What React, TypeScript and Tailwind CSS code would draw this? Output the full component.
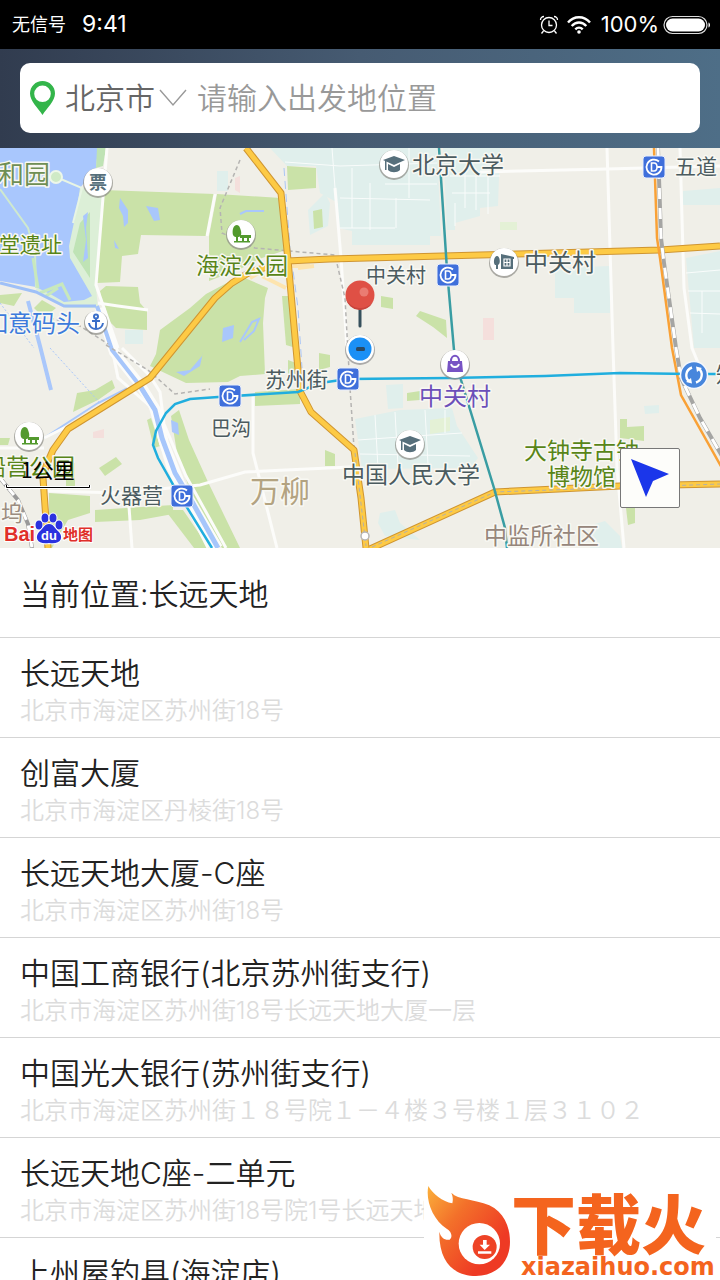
import React, { useState } from 'react';

interface Place {
  name: string;
  address?: string;
}

interface MapLabel {
  text: string;
  x: number;
  y: number;
  size: number;
  color: string;
}

const places: Place[] = [
  { name: '长远天地', address: '北京市海淀区苏州街18号' },
  { name: '创富大厦', address: '北京市海淀区丹棱街18号' },
  { name: '长远天地大厦-C座', address: '北京市海淀区苏州街18号' },
  { name: '中国工商银行(北京苏州街支行)', address: '北京市海淀区苏州街18号长远天地大厦一层' },
  { name: '中国光大银行(苏州街支行)', address: '北京市海淀区苏州街１８号院１－４楼３号楼１层３１０２' },
  { name: '长远天地C座-二单元', address: '北京市海淀区苏州街18号院1号长远天地' },
  { name: '上州屋钓具(海淀店)' },
];

const SLATE = '#4b5b5f';
const PARK = '#588518';

const labels: MapLabel[] = [
  { text: '和园', x: -2, y: 36, size: 26, color: '#6f8f55' },
  { text: '堂遗址', x: -1, y: 104, size: 21, color: PARK },
  { text: '如意码头', x: -16, y: 184, size: 24, color: '#3d7bdc' },
  { text: '海淀公园', x: 196, y: 126, size: 23, color: PARK },
  { text: '北京大学', x: 412, y: 25, size: 23, color: SLATE },
  { text: '五道', x: 675, y: 26, size: 21, color: SLATE },
  { text: '中关村', x: 524, y: 123, size: 24, color: SLATE },
  { text: '中关村', x: 366, y: 135, size: 20, color: SLATE },
  { text: '中关村', x: 419, y: 257, size: 24, color: '#6c4fb9' },
  { text: '苏州街', x: 265, y: 239, size: 21, color: SLATE },
  { text: '巴沟', x: 211, y: 288, size: 20, color: SLATE },
  { text: '中国人民大学', x: 342, y: 335, size: 23, color: SLATE },
  { text: '大钟寺古钟', x: 524, y: 311, size: 23, color: PARK },
  { text: '博物馆', x: 547, y: 337, size: 23, color: PARK },
  { text: '中监所社区', x: 484, y: 396, size: 23, color: '#96867b' },
  { text: '万柳', x: 250, y: 354, size: 30, color: '#b3a381' },
  { text: '火器营', x: 100, y: 355, size: 21, color: SLATE },
  { text: '船营公园', x: -17, y: 327, size: 23, color: PARK },
  { text: '坞', x: 1, y: 373, size: 22, color: '#9b8c80' },
  { text: '知', x: 716, y: 234, size: 21, color: SLATE },
];

const metroStops = [
  [448, 127],
  [654, 19],
  [348, 231],
  [230, 248],
  [182, 348],
];

const greens = [
  'M103 42 215 46 206 88 141 87 138 106 122 108 120 134 97 135Z',
  'M217 46 281 50 286 102 262 110 240 121 209 133V88Z',
  'M100 143 106 138 138 139 140 155 147 163 147 182 116 180 104 168Z',
  'M156 206 160 182 190 160 206 146 240 128 268 140 265 150 263 175 265 226 240 228 228 234 186 235 150 218Z',
  'M0 147 22 145 14 158 0 155Z',
  'M34 160 42 152 56 160 44 170Z',
  'M73 264 77 245 95 242 112 232 115 240 98 252Z',
  'M99 320 116 309 122 316 105 328Z',
  'M0 290H10L8 297H0Z',
  'M66 315H75V338H66Z',
  'M49 345 90 348V365L68 372 62 382 52 400H49Z',
  'M95 362 173 357V366L140 372 95 374Z',
  'M171 268 179 262 189 292 208 334 240 400H222L192 348 177 305Z',
  'M165 362H183L209 400H194Z',
  'M147 272 151 270 160 298 154 300Z',
  'M255 244 300 241V256L255 258Z',
  'M282 148 290 148 296 200 286 197Z',
  'M319 205 330 207V219L319 222Z',
  'M288 212 296 215V230H288Z',
  'M325 302 335 306V318H325Z',
  'M407 245 420 243V252L407 253Z',
  'M620 271H627V279L644 278V293L620 290Z',
  'M626 360H635V375L628 377Z',
  'M287 18 316 20V40L288 42Z',
  'M313 63 322 61 323 79 314 81Z',
  'M381 148 393 150V161L381 159Z',
  'M416 168 420 163 446 172 447 190 433 179Z',
];

const campuses = [
  'M270 0H437L441 88 430 88V97H352V83L338 80V55L320 45 316 18 287 18Z',
  'M443 0H500L498 58 480 60V68L455 75V82H447Z',
  'M308 62 325 45 330 55 328 78 310 87Z',
  'M355 271 400 262 452 260 457 278 478 310 470 320 362 321Z',
  'M386 237 403 236V260L388 261Z',
  'M683 43 720 40V57H683Z',
  'M686 110 720 103V200H694Z',
  'M555 120 610 118V165H574V150H555Z',
  'M644 258 659 257V265L645 266Z',
  'M595 376 605 373 620 388 622 400H590Z',
  'M380 365 395 362 400 375 420 392 385 388 378 375Z',
  'M217 23H228V43H217Z',
  'M125 182H143V196H125Z',
];

const majorRoads = [
  'M246 0 281 45 288 112 296 200 300 243 311 264 354 302 361 350 366 400',
  'M48 400 43 330 46 318 53 302 68 281 150 230 215 150 232 135 250 124 287 113 330 111 480 107 660 102 720 98',
  'M370 401 495 344 620 338 720 336',
];

const minorRoads = [
  'M607 0 613 200 617 320 624 400',
  'M480 24 607 21 720 18',
  'M680 0 684 140 692 200 701 222',
  'M335 40 341 110 347 200',
  'M253 248 253 305 277 400',
  'M48 343 120 345 200 337 245 324 350 319',
  'M128 345 132 400',
  'M107 0 96 137 118 200',
  'M215 46 207 88',
  'M0 300H44M44 290 68 278',
  'M98 155 118 158 148 162',
  'M112 200 118 230 150 258 168 320 208 400',
  'M122 200 150 228 160 244 164 276 186 328 226 400',
];

const campusPaths = [
  'M332 0 335 40M285 14 340 18 437 15M340 50 430 52M352 20V80M370 35V82M396 50V80M409 0V50M340 80H395M385 36H437',
  'M450 28H500M452 45H490M455 55 455 78M465 20V60M476 28V62M488 26V66',
  'M375 267 378 320M395 264 398 318M425 262 428 316M358 292 400 289 462 285M360 306 470 308M445 262V285',
  'M686 125 720 122M688 143H720M690 165 720 166M702 143V185',
];

const RoundBadge: React.FC<{ x: number; y: number; r?: number; children?: React.ReactNode }> = ({
  x,
  y,
  r = 14,
  children,
}) => (
  <g transform={`translate(${x} ${y})`}>
    <circle cy="1" r={r + 1} fill="#8b8b86" opacity="0.7" />
    <circle r={r} fill="#fff" />
    {children}
  </g>
);

const TreeGlyph = () => (
  <g fill="#539a2e">
    <path d="M-4-9C-8-9-9-3-8 1-7 3-5 3-5 3V8H-3V3C-1 3 1 1 0-3-1-7-2-9-4-9Z" />
    <path d="M-1 1H10V4H8V8H6V4H3V8H1V4H-1ZM-7 7H9V8.500H-7Z" />
  </g>
);

const CapGlyph = () => (
  <g fill="#566f7b">
    <path d="M0-8 11-4 0 1-11-4Z" />
    <path d="M-6 0 0 3 6 0V6C3 9-3 9-6 6Z" />
    <path d="M-9-3H-7.500V6H-9Z" />
  </g>
);

const MetroStop: React.FC<{ x: number; y: number }> = ({ x, y }) => (
  <g transform={`translate(${x} ${y})`}>
    <rect x="-11" y="-11" width="22" height="22" rx="3" fill="#3f6fdb" stroke="#e8eefb" />
    <path d="M5-5.500A7.500 7.500 0 1 0 7.500 0H3" fill="none" stroke="#fff" strokeWidth="1.800" />
    <path d="M-2.500-4H0C4-4 4 4 0 4H-2.500Z" fill="none" stroke="#fff" strokeWidth="1.600" />
  </g>
);

const StatusBar = () => (
  <div className="flex h-[49px] shrink-0 items-center justify-between bg-black pr-2.5 pl-3 text-white">
    <div className="flex items-center gap-4">
      <span className="text-lg">无信号</span>
      <span className="text-[23px]">9:41</span>
    </div>
    <div className="flex items-center">
      <svg width="20" height="20" viewBox="0 0 20 20" fill="none" stroke="#fff" strokeWidth="1.300" className="mr-2">
        <circle cx="10" cy="10" r="7.500" />
        <path d="M10 5.500V10.500H13.500M1.500 5C1.500 3 3 1.500 5 1.500M18.500 5C18.500 3 17 1.500 15 1.500M4.500 16 2.500 18.500M15.500 16 17.500 18.500" />
      </svg>
      <svg width="24" height="18" viewBox="0 0 24 18" fill="none" stroke="#fff" strokeWidth="2.400" className="mr-2.5">
        <path d="M1 6.500C7-0.500 17-0.500 23 6.500M4.700 10C9 5.300 15 5.300 19.300 10M8.300 13.300C10.500 11 13.500 11 15.700 13.300" />
        <circle cx="12" cy="16" r="1.800" fill="#fff" stroke="none" />
      </svg>
      <span className="text-[22px]">100%</span>
      <svg width="47" height="20" viewBox="0 0 47 20" className="ml-1">
        <rect x="1" y="1.500" width="43" height="17" rx="8.500" fill="none" stroke="#ddd" strokeWidth="1.200" />
        <rect x="3" y="3.500" width="39" height="13" rx="6.500" fill="#fff" />
        <path d="M45.500 7.500C47.500 8 47.500 12 45.500 12.500Z" fill="#fff" />
      </svg>
    </div>
  </div>
);

const SearchHeader = () => {
  const [city, setCity] = useState('北京市');
  const [keyword, setKeyword] = useState('');

  return (
    <header className="shrink-0 bg-linear-to-r from-[#313c4f] via-[#465b72] to-[#4e6e87] px-5 pt-3.5 pb-[15px]">
      <form className="flex h-[70px] items-center rounded-[10px] bg-white pl-2.5">
        <svg width="25" height="34" viewBox="0 0 25 34" className="mr-2.5 shrink-0">
          <path
            d="M12.500 0C5.500 0 0 5.500 0 12.500 0 20 8 27 12.500 34 17 27 25 20 25 12.500 25 5.500 19.500 0 12.500 0ZM12.500 4.500A8.300 8.300 0 1 1 12.500 21.100 8.300 8.300 0 1 1 12.500 4.500Z"
            fill="#33b54a"
            fillRule="evenodd"
          />
        </svg>
        <label className="flex shrink-0 items-center gap-1">
          <select
            aria-label="城市"
            value={city}
            onChange={(e) => setCity(e.target.value)}
            className="h-12 appearance-none bg-transparent text-[30px] font-[350] text-[#666] outline-none"
          >
            <option>北京市</option>
          </select>
          <svg width="28" height="18" viewBox="0 0 28 18" fill="none" stroke="#999" strokeWidth="1.400">
            <path d="M1 1 14 16 27 1" />
          </svg>
        </label>
        <input
          aria-label="出发地位置"
          type="text"
          value={keyword}
          onChange={(e) => setKeyword(e.target.value)}
          placeholder="请输入出发地位置"
          className="ml-2.5 h-12 min-w-0 flex-1 bg-transparent text-[30px] font-[350] text-[#666] outline-none placeholder:text-[#999]"
        />
      </form>
    </header>
  );
};

const CityMap = () => (
  <section className="relative h-[400px] shrink-0 overflow-hidden bg-[#f0efe8]">
    <svg
      viewBox="0 0 720 400"
      preserveAspectRatio="xMidYMid slice"
      className="block h-full w-full font-['Noto_Sans_CJK_SC',sans-serif]"
    >
      <rect width="720" height="400" fill="#f0efe8" />

      {/* Land use */}
      {campuses.map((d) => (
        <path key={d} d={d} fill="#e0efec" />
      ))}
      {greens.map((d) => (
        <path key={d} d={d} fill="#cae2a8" />
      ))}
      <path d="M235 30 240 28V45L235 42ZM93 284 104 281V290H93Z" fill="#f4dfdc" />
      <path d="M430 272 450 269V283L430 286ZM500 74H517V82H500Z" fill="#e4f1d6" />
      <path d="M483 170H494V192H483Z" fill="#f5dfdc" />

      {/* Lake and canals */}
      <path d="M78 40 103 41 96 140 98 160 66 160 36 142Z" fill="#dcefd7" />
      <path d="M0 0H98L96 20 80 40 77 60 69 98 70 110 92 148 84 152 64 154 52 147 36 139 0 133Z" fill="#a9c7fd" />
      <path d="M97 0H106L103 18 96 20ZM80 75 90 64V130L73 104Z" fill="#bfe3b5" />
      <path d="M83 68 88 64 86 80 88 110 83 114 86 92Z" fill="#a9c7fd" />
      <path d="M73 75 82 40 56 29" fill="none" stroke="#e8f5e4" strokeWidth="2" />
      <circle cx="56" cy="29" r="6" fill="#cfeac6" stroke="#edf7e9" strokeWidth="2" />
      <path d="M0 41 28 80 35 105 36 140" fill="none" stroke="#cfe9cf" strokeWidth="2" />
      <path d="M33 110 38 140M40 145 62 136 70 152M46 148 58 140" fill="none" stroke="#c8e8bd" strokeWidth="3" />
      <path d="M0 135 36 144 64 158 96 158" fill="none" stroke="#9fc0f7" strokeWidth="3" />
      <path d="M28 153 40 198 51 242" fill="none" stroke="#a9c7fb" strokeWidth="4" />
      <path d="M44 290 98 255 128 240" fill="none" stroke="#a9c7fb" strokeWidth="2" />
      <path d="M50 200 100 255M0 155 34 200" fill="none" stroke="#a9c7fb" strokeDasharray="2 2" />
      <path d="M120 50 128 62 128 75 124 79 123 68 119 60ZM146 58 158 60 160 72 154 73ZM114 92 119 101 115 100Z" fill="#a9c7fb" />
      <path d="M223 180 234 177 233 190 222 194ZM176 224 190 222 202 208 203 204 200 218 184 228ZM171 272 178 275 179 287 172 284Z" fill="#a9c7fb" />
      <path d="M240 66 246 63H264M240 194 252 174 259 171 254 183 244 192" fill="none" stroke="#a9c7fb" strokeWidth="2" />

      {/* Streets */}
      {minorRoads.map((d) => (
        <path key={d} d={d} fill="none" stroke="#fcfcfa" strokeWidth="3" />
      ))}
      {campusPaths.map((d) => (
        <path key={d} d={d} fill="none" stroke="#f9fcfb" strokeWidth="1" />
      ))}
      <path d="M100 160 114 204 141 238 156 262 164 295 180 335 218 400" fill="none" stroke="#fcfcfa" strokeWidth="10" />
      <path d="M97 158 112 202 140 238 155 262" fill="none" stroke="#a6c6fb" strokeWidth="4" />
      <path d="M140 238 155 262 162 290 175 325 190 350 218 400" fill="none" stroke="#a6c6fb" strokeWidth="5" />
      <path d="M284 20 290 100 298 160 302 220" fill="none" stroke="#aac6f6" strokeDasharray="8 5" />
      <path
        d="M240 12 220 60 222 85 255 100 335 107 345 150 350 240 354 300M106 197 148 222 175 246 210 241M50 170 80 178 108 196"
        fill="none"
        stroke="#b5b4b2"
        strokeWidth="1.500"
        strokeDasharray="4 3"
      />
      <path d="M250 130 270 118 310 118M262 128 286 140M298 120 314 118" fill="none" stroke="#fde4ae" strokeWidth="4" />
      {majorRoads.map((d) => (
        <path key={d} d={d} fill="none" stroke="#cf9531" strokeWidth="7" strokeLinejoin="round" />
      ))}
      {majorRoads.map((d) => (
        <path key={d} d={d} fill="none" stroke="#fdca45" strokeWidth="5" strokeLinejoin="round" />
      ))}
      <path d="M355 305 366 398M372 399 495 344 720 336" fill="none" stroke="#b3b0aa" strokeDasharray="4 3" />

      {/* Railways and metro lines */}
      <path d="M658 0 661 90 664 115 676 200 681 230 700 270 722 308" fill="none" stroke="#a5a5a3" strokeWidth="4" />
      <path
        d="M658 0 661 90 664 115 676 200 681 230 700 270 722 308"
        fill="none"
        stroke="#fff"
        strokeWidth="3"
        strokeDasharray="11 9"
      />
      <path d="M0 330 18 352 28 376 32 400" fill="none" stroke="#999" strokeWidth="4" />
      <path d="M0 330 18 352 28 376 32 400" fill="none" stroke="#fff" strokeWidth="3" strokeDasharray="8 6" />
      <path d="M654 0 657 90 660 110 672 200 681 247 722 320" fill="none" stroke="#f9a136" strokeWidth="2.500" />
      <path d="M439 0 447 122 454 202 461 232 494 340 505 380 507 400" fill="none" stroke="#399da3" strokeWidth="2.500" />
      <path
        d="M212 400 175 340 158 310 153 297 156 283 166 265 175 256 190 251 218 249 298 244 320 235 348 231 450 230 545 228 620 225 690 226 720 226"
        fill="none"
        stroke="#20aede"
        strokeWidth="2.500"
      />
      <circle cx="365" cy="388" r="4" fill="#fff" stroke="#b5b5b5" strokeWidth="1.500" />

      {labels.map((label) => (
        <text
          key={`${label.text}${label.x}`}
          x={label.x}
          y={label.y}
          fontSize={label.size}
          fill={label.color}
          stroke="#f8f8f3"
          strokeWidth="3"
          strokeLinejoin="round"
          paintOrder="stroke"
        >
          {label.text}
        </text>
      ))}

      {/* Points of interest */}
      {metroStops.map(([x, y]) => (
        <MetroStop key={`${x}-${y}`} x={x} y={y} />
      ))}
      <RoundBadge x={98} y={34}>
        <text y="7" fontSize="18" fontWeight="700" textAnchor="middle" fill="#566f7b">
          票
        </text>
      </RoundBadge>
      <RoundBadge x={241} y={86}>
        <TreeGlyph />
      </RoundBadge>
      <RoundBadge x={29} y={288}>
        <TreeGlyph />
      </RoundBadge>
      <RoundBadge x={394} y={16}>
        <CapGlyph />
      </RoundBadge>
      <RoundBadge x={410} y={296}>
        <CapGlyph />
      </RoundBadge>
      <RoundBadge x={96} y={174} r={11}>
        <g fill="none" stroke="#3b6fc9" strokeWidth="2">
          <circle cy="-5.500" r="2" />
          <path d="M0-3V7M-4-1H4M-7 1C-6 9 6 9 7 1" />
        </g>
      </RoundBadge>
      <RoundBadge x={504} y={114}>
        <path d="M-7-6C-10-6-11 1-9 3H-8V7H-6V3C-3 2-4-6-7-6Z" fill="#566f7b" />
        <path d="M-3-8 10-5V-3H9V7H-3Z" fill="#566f7b" />
        <path d="M0-3H6V4H0ZM3-3V4M0 0.500H6" fill="none" stroke="#fff" strokeWidth="1.200" />
      </RoundBadge>
      <RoundBadge x={455} y={216}>
        <path d="M-7-3H7L8 8H-8Z" fill="#7753c4" />
        <path d="M-4-3C-4-10 4-10 4-3" fill="none" stroke="#7753c4" strokeWidth="2" />
        <path d="M-4 0C-3 4 3 4 4 0" fill="none" stroke="#fff" strokeWidth="1.800" />
      </RoundBadge>
      <g transform="translate(694 227)">
        <circle r="13.500" fill="#4886dc" stroke="#f4f7fd" strokeWidth="1.500" />
        <path d="M-2-7.500C-9-5-9 3-5 6M2 7.500C9 5 9-3 5-6" fill="none" stroke="#fff" strokeWidth="2.400" />
        <path d="M-8 7-3 3-2 8.500ZM8-7 3-3 2-8.500Z" fill="#fff" />
      </g>

      {/* Current position and pin */}
      <circle cx="360" cy="202" r="15" fill="#8f8f8f" opacity="0.7" />
      <circle cx="360" cy="201" r="14" fill="#fff" />
      <circle cx="360" cy="201" r="11.500" fill="#1b90f5" />
      <rect x="356" y="199" width="9" height="4" rx="1.500" fill="#2c4a63" />
      <path d="M360 160V178" stroke="#36505c" strokeWidth="3" strokeLinecap="round" />
      <circle cx="360" cy="147" r="14.500" fill="#df5045" />
      <path d="M346 151A14.500 14.500 0 0 0 373 154 16 16 0 0 1 346 151Z" fill="#c8443c" />
      <circle cx="364" cy="144" r="4.500" fill="#ea7c72" />

      {/* Scale */}
      <text x="21" y="330" fontSize="21" fill="#000">
        1公里
      </text>
      <path d="M6.500 337V339.500H89.500V337" fill="none" stroke="#fff" strokeWidth="3" />
      <path d="M6.500 337V339.500H89.500V337" fill="none" stroke="#000" />

      {/* Provider logo */}
      <g stroke="#fff" strokeWidth="2" paintOrder="stroke">
        <text x="4" y="393" fontSize="20" fontWeight="700" fill="#e02f2a" fontFamily="Liberation Sans, sans-serif">
          Bai
        </text>
        <text x="63" y="392" fontSize="15" fontWeight="700" fill="#e02f2a">
          地图
        </text>
        <g fill="#2b32df">
          <ellipse cx="39" cy="377" rx="3.500" ry="4.500" />
          <ellipse cx="45" cy="370" rx="3.500" ry="4.500" />
          <ellipse cx="53" cy="370" rx="3.500" ry="4.500" />
          <ellipse cx="59" cy="377" rx="3.500" ry="4.500" />
          <path d="M49 376C44 376 43 381 39 384 34 390 38 397 49 395 60 397 64 390 59 384 55 381 54 376 49 376Z" />
        </g>
      </g>
      <text
        x="49"
        y="392"
        fontSize="13"
        fontWeight="700"
        textAnchor="middle"
        fill="#fff"
        fontFamily="Liberation Sans, sans-serif"
      >
        du
      </text>
    </svg>

    <button
      type="button"
      aria-label="定位"
      className="absolute right-10 bottom-10 flex size-[60px] items-center justify-center rounded-xs border border-[#777] bg-[#fdfdfa]"
    >
      <svg width="40" height="40" viewBox="0 0 40 40">
        <path d="M1 1 39 16 23 23 16 39Z" fill="#1b36ea" />
      </svg>
    </button>
  </section>
);

const PlaceRow: React.FC<{ place: Place }> = ({ place }) => (
  <li className="border-b border-[#d5d5d5] px-5 pt-[17px] pb-2.5">
    <p className="truncate text-[30px] leading-9 font-[350] text-[#222]">{place.name}</p>
    <p className="mt-1 h-8 truncate text-2xl leading-8 font-[350] text-[#dcdcdc]">{place.address}</p>
  </li>
);

const SiteLogo = () => (
  <svg viewBox="0 0 292 94" className="absolute right-1 bottom-0 w-[292px] bg-white">
    <defs>
      <linearGradient id="flame" x1="0" y1="0" x2="0.800" y2="0.700">
        <stop offset="0" stopColor="#fbb03b" />
        <stop offset="0.450" stopColor="#f3702a" />
        <stop offset="1" stopColor="#ee3a24" />
      </linearGradient>
    </defs>
    <g transform="translate(-24 -36) scale(0.3333)">
      <path
        d="M85 108C98 132 128 155 157 160 160 148 158 138 154 128 175 150 222 146 268 166 310 186 330 228 330 275 330 340 285 378 228 378 165 378 116 340 118 245 122 262 135 272 149 269 158 262 156 245 140 236 98 210 76 150 85 108Z"
        fill="url(#flame)"
      />
      <circle cx="238" cy="281" r="62" fill="#fff" />
      <circle cx="254" cy="291" r="36" fill="#ee4326" />
      <path d="M249 270H260V284H270L254 300 239 284H249ZM234 304H274V311H234Z" fill="#fff" />
    </g>
    <text x="87" y="63" fontSize="65" fontWeight="900" fill="#f4641e" fontFamily="Noto Sans CJK SC, sans-serif">
      下载火
    </text>
    <text x="97" y="89" fontSize="24" fontWeight="700" fill="#f4641e" fontFamily="DejaVu Sans, sans-serif">
      xiazaihuo.com
    </text>
  </svg>
);

export default function App() {
  return (
    <main className="relative flex h-screen flex-col overflow-hidden bg-white font-['Inter','Noto_Sans_CJK_SC',sans-serif]">
      <StatusBar />
      <SearchHeader />
      <CityMap />
      <h1 className="flex h-[90px] shrink-0 items-center border-b border-[#d5d5d5] px-5 pt-1 text-[30px] font-[350] text-[#222]">
        当前位置:长远天地
      </h1>
      <ul className="min-h-0 flex-1 overflow-y-auto [scrollbar-width:none]">
        {places.map((place) => (
          <PlaceRow key={place.name} place={place} />
        ))}
      </ul>
      <SiteLogo />
    </main>
  );
}
